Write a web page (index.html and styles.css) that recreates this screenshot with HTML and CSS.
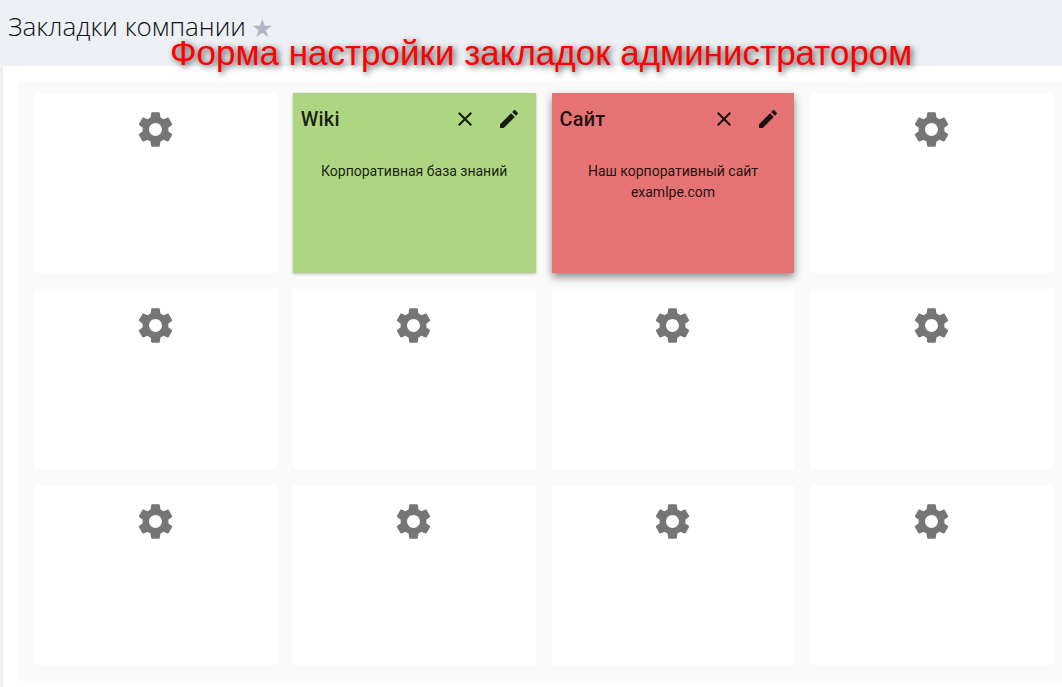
FILE: index.html
```html
<!DOCTYPE html>
<html lang="ru">
<head>
  <meta charset="UTF-8">
  <title>Закладки компании</title>
  <link rel="stylesheet" href="styles.css">
</head>
<body>
  <svg class="defs" width="0" height="0">
    <defs>
      <path id="gear" d="M19.14 12.94c.04-.3.06-.61.06-.94 0-.32-.02-.64-.07-.94l2.03-1.58c.18-.14.23-.41.12-.61l-1.92-3.32c-.12-.22-.37-.29-.59-.22l-2.39.96c-.5-.38-1.03-.7-1.62-.94l-.36-2.54c-.04-.24-.24-.41-.48-.41h-3.84c-.24 0-.43.17-.47.41l-.36 2.54c-.59.24-1.13.57-1.62.94l-2.39-.96c-.22-.08-.47 0-.59.22L2.74 8.87c-.12.21-.08.47.12.61l2.03 1.58c-.05.3-.09.63-.09.94s.02.64.07.94l-2.03 1.58c-.18.14-.23.41-.12.61l1.92 3.32c.12.22.37.29.59.22l2.39-.96c.5.38 1.03.7 1.62.94l.36 2.54c.05.24.24.41.48.41h3.84c.24 0 .44-.17.47-.41l.36-2.54c.59-.24 1.13-.56 1.62-.94l2.39.96c.22.08.47 0 .59-.22l1.92-3.32c.12-.22.07-.47-.12-.61l-2.01-1.58zM12 15.6c-1.98 0-3.6-1.62-3.6-3.6s1.62-3.6 3.6-3.6 3.6 1.62 3.6 3.6-1.62 3.6-3.6 3.6z"/>
      <path id="close" d="M19 6.41 17.59 5 12 10.59 6.41 5 5 6.41 10.59 12 5 17.59 6.41 19 12 13.41 17.59 19 19 17.59 13.41 12z"/>
      <path id="edit" d="M3 17.25V21h3.75L17.81 9.94l-3.75-3.75L3 17.25zM20.71 7.04c.39-.39.39-1.02 0-1.41l-2.34-2.34c-.39-.39-1.02-.39-1.41 0l-1.83 1.83 3.75 3.75 1.83-1.83z"/>
    </defs>
  </svg>

  <header class="page-head">
    <h1 class="page-title">Закладки компании</h1>
    <span class="fav">★</span>
  </header>

  <div class="caption">Форма настройки закладок администратором</div>

  <main class="sheet">
    <div class="board">
      <div class="tile empty"><svg class="gear" viewBox="0 0 24 24"><use href="#gear"/></svg></div>

      <div class="tile link green">
        <div class="tile-head">
          <span class="tile-name">Wiki</span>
          <svg class="act" viewBox="0 0 24 24"><use href="#close"/></svg>
          <svg class="act" viewBox="0 0 24 24"><use href="#edit"/></svg>
        </div>
        <p class="tile-text">Корпоративная база знаний</p>
      </div>

      <div class="tile link red">
        <div class="tile-head">
          <span class="tile-name">Сайт</span>
          <svg class="act" viewBox="0 0 24 24"><use href="#close"/></svg>
          <svg class="act" viewBox="0 0 24 24"><use href="#edit"/></svg>
        </div>
        <p class="tile-text">Наш корпоративный сайт<br>examlpe.com</p>
      </div>

      <div class="tile empty"><svg class="gear" viewBox="0 0 24 24"><use href="#gear"/></svg></div>
      <div class="tile empty"><svg class="gear" viewBox="0 0 24 24"><use href="#gear"/></svg></div>
      <div class="tile empty"><svg class="gear" viewBox="0 0 24 24"><use href="#gear"/></svg></div>
      <div class="tile empty"><svg class="gear" viewBox="0 0 24 24"><use href="#gear"/></svg></div>
      <div class="tile empty"><svg class="gear" viewBox="0 0 24 24"><use href="#gear"/></svg></div>
      <div class="tile empty"><svg class="gear" viewBox="0 0 24 24"><use href="#gear"/></svg></div>
      <div class="tile empty"><svg class="gear" viewBox="0 0 24 24"><use href="#gear"/></svg></div>
      <div class="tile empty"><svg class="gear" viewBox="0 0 24 24"><use href="#gear"/></svg></div>
      <div class="tile empty"><svg class="gear" viewBox="0 0 24 24"><use href="#gear"/></svg></div>
    </div>
  </main>
</body>
</html>
```

FILE: styles.css
```css
* {
  margin: 0;
  padding: 0;
  box-sizing: border-box;
}
body {
  height: 687px;
  overflow: hidden;
  background-color: #edf1f5;
  font-family: Roboto, "Liberation Sans", sans-serif;
  color: rgba(0, 0, 0, 0.87);
}
.defs {
  position: absolute;
}
.page-head {
  display: flex;
  align-items: flex-start;
  gap: 5px;
  height: 66px;
  padding: 8px 0 0 8px;
}
.page-title {
  font-family: "Open Sans", sans-serif;
  font-weight: 300;
  font-size: 26px;
  line-height: 36px;
  color: #111;
}
.fav {
  margin-top: 3px;
  font-family: "DejaVu Sans", sans-serif;
  font-size: 25px;
  line-height: 36px;
  color: #b1b7c1;
}
.caption {
  position: absolute;
  top: 33px;
  left: 170px;
  font-family: "Liberation Sans", sans-serif;
  font-size: 35px;
  line-height: 40px;
  white-space: nowrap;
  color: #ff0000;
  text-shadow: 2px 2px 6px rgba(0, 0, 0, 0.7);
}
.sheet {
  height: 621px;
  margin-left: 3px;
  padding: 15px 0 6px 15px;
  background-color: #fff;
}
.board {
  display: grid;
  grid-template-columns: repeat(4, 1fr);
  grid-template-rows: repeat(3, 180px);
  gap: 16px;
  height: 600px;
  padding: 12px 8.8px 16px 16px;
  background-color: #fafafa;
}
.tile {
  border-radius: 2px;
}
.empty {
  display: flex;
  justify-content: center;
  padding-top: 14.5px;
  padding-right: 0.5px;
  background-color: #fff;
}
.gear {
  width: 43px;
  height: 43px;
  fill: #757575;
}
.link {
  border-radius: 0;
  padding: 4px 4px 0 8px;
}
.green {
  background-color: #aed581;
  box-shadow: 0 1px 3px rgba(0, 0, 0, 0.25);
}
.red {
  background-color: #e57373;
  box-shadow: 0 4px 8px rgba(0, 0, 0, 0.45);
}
.tile-head {
  display: flex;
  align-items: center;
  gap: 20px;
  height: 44px;
  padding-right: 10.5px;
}
.tile-name {
  flex: 1;
  font-weight: 500;
  font-size: 20px;
  letter-spacing: 0.15px;
}
.act {
  width: 24px;
  height: 24px;
  fill: rgba(0, 0, 0, 0.87);
}
.tile-text {
  margin-top: 20px;
  padding-right: 4px;
  font-size: 14px;
  line-height: 21px;
  text-align: center;
}
```
